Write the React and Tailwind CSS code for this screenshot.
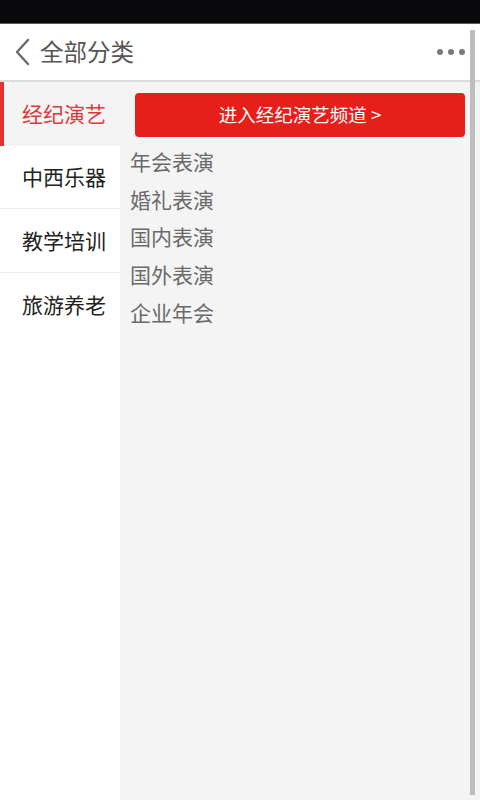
import React from 'react';

const categories = ['经纪演艺', '中西乐器', '教学培训', '旅游养老'];
const subItems = ['年会表演', '婚礼表演', '国内表演', '国外表演', '企业年会'];

const font = { fontFamily: '"Noto Sans CJK SC", "Noto Sans", sans-serif' };

export default function App() {
    const active = 0;

    return (
        <div className="relative w-[480px] h-[800px] flex flex-col bg-white overflow-hidden" style={font}>
            {/* status bar */}
            <div className="h-[24px] bg-[#0a0a0c] border-b border-[#5a5a5a] shrink-0" />

            {/* header */}
            <div className="h-[58px] shrink-0 flex items-center bg-white border-b-2 border-[#dcdcdc]">
                <svg width="18" height="28" viewBox="0 0 18 28" className="ml-[13px]">
                    <path d="M15 2 L4 14 L15 26" fill="none" stroke="#6b6b6b" strokeWidth="2.4" strokeLinecap="round" strokeLinejoin="round" />
                </svg>
                <span className="ml-[9px] text-[23.5px] text-[#555]">全部分类</span>
                <div className="ml-auto mr-[15px] flex gap-[5px]">
                    <span className="w-[6px] h-[6px] rounded-full bg-[#7a7a7a]" />
                    <span className="w-[6px] h-[6px] rounded-full bg-[#7a7a7a]" />
                    <span className="w-[6px] h-[6px] rounded-full bg-[#7a7a7a]" />
                </div>
            </div>

            {/* body */}
            <div className="flex flex-1 min-h-0">
                <div className="w-[120px] shrink-0 bg-white">
                    {categories.map((c, i) => {
                        const isActive = i === active;
                        const last = i === categories.length - 1;
                        return (
                            <div
                                key={c}
                                className={`h-[63.5px] flex items-center text-[21px] ${isActive ? 'bg-[#f4f4f4] text-[#e0383a] border-l-4 border-[#e8312f] pl-[18px]' : `pl-[22px] text-[#222] ${last ? '' : 'border-b border-[#eeeeee]'}`}`}
                            >
                                {c}
                            </div>
                        );
                    })}
                </div>

                <div className="flex-1 bg-[#f4f4f4] pt-[11px] pr-[15px]">
                    <button className="ml-[15px] w-[330px] h-[44px] rounded-[4px] bg-[#e61f1a] text-white text-[18.5px] flex items-center justify-center">
                        进入经纪演艺频道 &gt;
                    </button>
                    <div className="mt-[6px] pl-[10px]">
                        {subItems.map(s => (
                            <div key={s} className="h-[37.7px] flex items-center text-[21px] text-[#6a6a6a]">{s}</div>
                        ))}
                    </div>
                </div>
            </div>

            {/* scrollbar */}
            <div className="absolute right-[5px] top-[30px] bottom-[5px] w-[5px] bg-[#bdbdbd]" />
        </div>
    );
}
